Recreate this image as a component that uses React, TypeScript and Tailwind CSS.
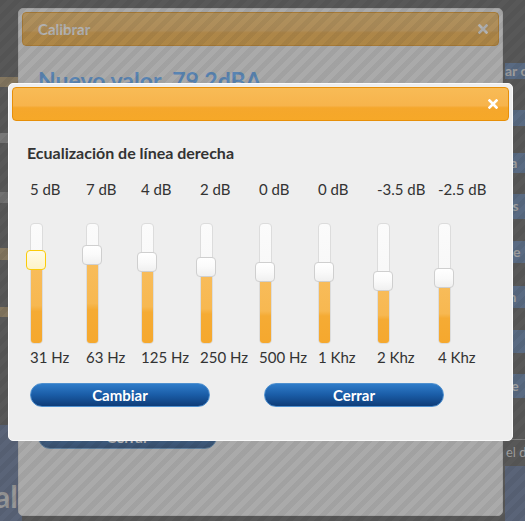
import React from 'react';

const bands = [
  { db: '5 dB', hz: '31 Hz', v: 5, w: 'w-[56px]', active: true },
  { db: '7 dB', hz: '63 Hz', v: 7, w: 'w-[55px]' },
  { db: '4 dB', hz: '125 Hz', v: 4, w: 'w-[59px]' },
  { db: '2 dB', hz: '250 Hz', v: 2, w: 'w-[59px]' },
  { db: '0 dB', hz: '500 Hz', v: 0, w: 'w-[59px]' },
  { db: '0 dB', hz: '1 Khz', v: 0, w: 'w-[59px]' },
  { db: '-3.5 dB', hz: '2 Khz', v: -3.5, w: 'w-[61px]' },
  { db: '-2.5 dB', hz: '4 Khz', v: -2.5, w: 'w-[50px]' },
];

const CloseX = ({ className }: { className: string }) => (
  <svg viewBox="0 0 10 10" className={className}>
    <path d="M1.5 1.5 L8.5 8.5 M8.5 1.5 L1.5 8.5" stroke="currentColor" strokeWidth="2.6" strokeLinecap="square" />
  </svg>
);

const VSlider = ({ v, active }: { v: number; active?: boolean }) => {
  // handle centre, px from the top of the track
  const c = 48 - v * 2.45;
  return (
    <div className="relative w-[13px] h-[121px] rounded-[4px] border border-[#dcdcdc] bg-[linear-gradient(to_bottom,#fbfbfb,#f3f3f3)]">
      <div
        className="absolute left-0 right-0 bottom-0 rounded-b-[3px] bg-[linear-gradient(to_bottom,#f8bd5c_0%,#f7b851_55%,#f5ab34_62%,#f5a82e_100%)]"
        style={{ top: c }}
      />
      <div
        className={`absolute -left-[5px] w-[20px] h-[20px] rounded-[4px] border ${
          active
            ? 'border-[#fbcb09] bg-[linear-gradient(to_bottom,#fffbe6,#fdf3c8)]'
            : 'border-[#cfcfcf] bg-[linear-gradient(to_bottom,#ffffff_0%,#fafafa_50%,#f0f0f0_100%)]'
        }`}
        style={{ top: c - 10 }}
      />
    </div>
  );
};

export default function App() {
  return (
    <div className="relative w-[525px] h-[521px] overflow-hidden bg-[#4a4a4a] font-['Lato',sans-serif]">
      {/* page behind the dialogs */}
      <div className="absolute inset-0 flex">
        <div className="w-[22px] flex flex-col">
          <div className="mt-[77px] h-[10px] bg-[#a08658]" />
          <div className="mt-[46px] h-[10px] bg-[#8a8a8a]" />
          <div className="mt-[49px] h-[11px] bg-[#7c7c7c]" />
          <div className="mt-[45px] h-[12px] bg-[#a08658]" />
          <div className="mt-[47px] h-[10px] bg-[#a08658]" />
          <div className="mt-[108px] flex-1 bg-[#4e628a] text-[#c8c8c8] font-bold text-[30px] leading-none pt-[56px] -ml-[5px]">
            al
          </div>
        </div>
        <div className="flex-1" />
        <div className="w-[20px] flex flex-col text-[14px] font-bold text-[#d8d8d8] leading-none whitespace-nowrap">
          <div className="mt-[63px] h-[16px] bg-[#4c6f9e] pt-[1px]">ar c</div>
          <div className="mt-[31px] h-[16px] bg-[#4c6f9e] pt-[1px]">u</div>
          <div className="mt-[27px] h-[20px] bg-[#4c6f9e] pt-[3px]">ra</div>
          <div className="mt-[21px] h-[25px] bg-[#4c6f9e] pt-[5px]">es</div>
          <div className="mt-[22px] h-[22px] bg-[#4c6f9e] pt-[4px]">de</div>
          <div className="mt-[23px] h-[22px] bg-[#4c6f9e] pt-[4px]">in</div>
          <div className="mt-[22px] h-[23px] bg-[#4c6f9e] pt-[4px]">r</div>
          <div className="mt-[21px] h-[24px] bg-[#4c6f9e] pt-[5px]">se</div>
          <div className="mt-[41px] border-t border-[#9a9a9a] h-[27px] pt-[6px] pl-[1px] text-[13px] font-normal">el d</div>
          <div className="flex-1 bg-[#4e628a]" />
        </div>
      </div>

      {/* back dialog: Calibrar */}
      <div className="absolute left-[18px] top-[8px] w-[485px] h-[508px] rounded-[5px] border border-[#dddddd] bg-[#eeeeee] p-[3px] flex flex-col">
        <div className="h-[34px] rounded-[4px] border border-[#e78f08] bg-[linear-gradient(to_bottom,#f8bb56_0%,#f7b44c_55%,#f5a72c_62%,#f6a828_100%)] flex items-center justify-between pl-[15px] pr-[10px]">
          <span className="text-white font-bold text-[15px]">Calibrar</span>
          <CloseX className="w-[10px] h-[10px] text-white" />
        </div>
        <div className="flex-1 flex flex-col px-[16px] pt-[20px] pb-[63px]">
          <div className="text-[#4da3ff] font-bold text-[23px] leading-[28px]">Nuevo valor&nbsp; 79.2dBA</div>
          <button className="mt-auto w-[179px] h-[24px] rounded-full border border-[#5b9bd5] bg-[linear-gradient(to_bottom,#2f7cc9,#1a5ca6_50%,#0e3c78)] text-white font-bold text-[15px] leading-none">
            Cerrar
          </button>
        </div>
      </div>

      {/* modal overlay */}
      <div className="absolute inset-0 bg-[#666666]/50 bg-[image:repeating-linear-gradient(135deg,rgba(0,0,0,0.05)_0px,rgba(0,0,0,0.05)_5px,transparent_5px,transparent_10px)]" />

      {/* front dialog: equalizer */}
      <div className="absolute left-[8px] top-[83px] w-[505px] h-[358px] rounded-[5px] border border-[#fafafa] bg-[#eeeeee] p-[3px] text-[#333333]">
        <div className="h-[34px] rounded-[4px] border border-[#e78f08] bg-[linear-gradient(to_bottom,#f8bb56_0%,#f7b44c_55%,#f5a72c_62%,#f6a828_100%)] flex items-center justify-end pr-[10px]">
          <CloseX className="w-[10px] h-[10px] text-white" />
        </div>
        <div className="px-[15px] pt-[23px]">
          <div className="h-[18px] leading-[18px] text-[16px] font-bold">Ecualización de línea derecha</div>
          <div className="pl-[3px] mt-[18px] flex">
            {bands.map((b, i) => (
              <div key={i} className={`${b.w} shrink-0 flex flex-col`}>
                <div className="h-[18px] leading-[18px] text-[15px] whitespace-nowrap">{b.db}</div>
                <div className="mt-[25px]">
                  <VSlider v={b.v} active={b.active} />
                </div>
                <div className="mt-[4px] h-[18px] leading-[18px] text-[15px] whitespace-nowrap">{b.hz}</div>
              </div>
            ))}
          </div>
          <div className="pl-[3px] mt-[17px] flex gap-[54px]">
            <button className="w-[180px] h-[24px] rounded-full border border-[#4f90cf] bg-[linear-gradient(to_bottom,#2f7cc9,#1a5ca6_50%,#0e3c78)] text-white font-bold text-[15px] leading-none">
              Cambiar
            </button>
            <button className="w-[180px] h-[24px] rounded-full border border-[#4f90cf] bg-[linear-gradient(to_bottom,#2f7cc9,#1a5ca6_50%,#0e3c78)] text-white font-bold text-[15px] leading-none">
              Cerrar
            </button>
          </div>
        </div>
      </div>
    </div>
  );
}
